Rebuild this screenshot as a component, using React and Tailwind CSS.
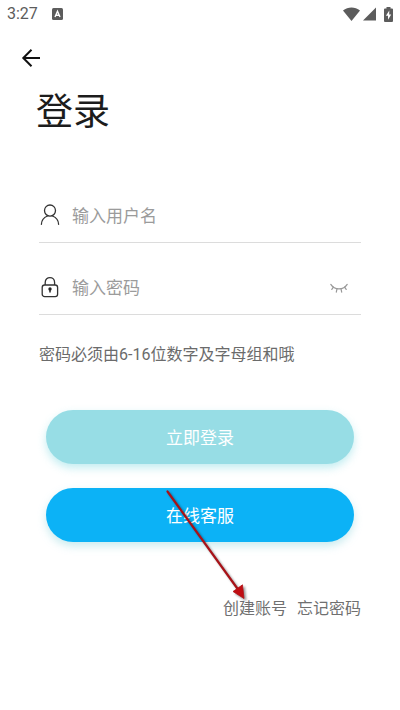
import React from "react";

function StatusBar() {
  return (
    <div className="flex h-7 items-center justify-between px-[7px] text-[#5c5c5c]">
      <div className="flex items-center gap-[14px]">
        <span className="text-base leading-7">3:27</span>
        <svg width="11" height="12" viewBox="0 0 11 12" aria-hidden="true">
          <rect width="11" height="12" rx="1.5" fill="#5c5c5c" />
          <path d="M3 9 L5.5 3.2 L8 9 M4 7.2 H7" fill="none" stroke="#fff" strokeWidth="1.4" />
        </svg>
      </div>
      <div className="flex items-center">
        <svg width="17" height="14" viewBox="0 0 17 14" aria-hidden="true">
          <path d="M8.5 14 L0 3.5 C5 -0.6 12 -0.6 17 3.5 Z" fill="#5c5c5c" />
        </svg>
        <svg className="ml-[3px]" width="13" height="14" viewBox="0 0 13 14" aria-hidden="true">
          <path d="M13 0.5 V13.5 H0 Z" fill="#5c5c5c" />
        </svg>
        <svg className="ml-2" width="9" height="15" viewBox="0 0 9 15" aria-hidden="true">
          <path d="M2.5 0 H6.5 V1.5 H8 Q9 1.5 9 2.5 V14 Q9 15 8 15 H1 Q0 15 0 14 V2.5 Q0 1.5 1 1.5 H2.5 Z" fill="#5c5c5c" />
          <path d="M5.3 3.5 L1.9 8.8 H4 V12.8 L7.2 7.4 H5.2 Z" fill="#fff" />
        </svg>
      </div>
    </div>
  );
}

function UserIcon() {
  return (
    <svg width="22" height="22" viewBox="0 0 22 22" fill="none" stroke="#333" strokeWidth="1.3" strokeLinecap="round" aria-hidden="true">
      <ellipse cx="11" cy="6.6" rx="5.5" ry="5.6" />
      <path d="M2.4 20.3 C2.6 16 4.8 13.4 8.4 12 M13.6 12 C17.2 13.4 19.4 16 19.6 20.3" />
    </svg>
  );
}

function LockIcon() {
  return (
    <svg width="22" height="22" viewBox="0 0 22 22" fill="none" stroke="#333" strokeWidth="1.3" aria-hidden="true">
      <rect x="3.2" y="9" width="15.4" height="11.6" rx="2.4" />
      <path d="M6.2 9 V6.5 C6.2 0 15.6 0 15.6 6.5 V9" />
      <circle cx="11" cy="13" r="1.7" fill="#222" stroke="none" />
      <path d="M11 13.5 V16.6" stroke="#222" strokeWidth="1.5" />
    </svg>
  );
}

function ClosedEyeIcon() {
  return (
    <svg width="18" height="10" viewBox="0 0 18 10" fill="none" stroke="#999" strokeWidth="1.2" strokeLinecap="round" aria-hidden="true">
      <path d="M0.8 1.4 C4.5 7.4 13.5 7.4 17.2 1.4" />
      <path d="M3.4 4.2 L1.8 6.4 M7 5.8 L6.3 9.2 M11 5.8 L11.7 9.2 M14.6 4.2 L16.2 6.4" />
    </svg>
  );
}

function Field({ id, label, type, icon, children }) {
  return (
    <div className="flex h-[72px] items-end border-b border-[#dcdcdc]">
      <div className="flex h-[55px] w-full items-center">
        <label htmlFor={id} aria-label={label} className="shrink-0">
          {icon}
        </label>
        <input
          id={id}
          type={type}
          placeholder={label}
          className="ml-[11px] min-w-0 flex-1 bg-transparent pt-[2px] text-[17px] leading-6 text-[#222] outline-none placeholder:text-[#9b9b9b]"
        />
        {children}
      </div>
    </div>
  );
}

function PointerArrow() {
  return (
    <svg
      className="pointer-events-none absolute left-[120px] top-[2px] overflow-visible drop-shadow-[2px_2px_1px_rgba(0,0,0,0.4)]"
      width="79"
      height="109"
      viewBox="0 0 79 109"
      aria-hidden="true"
    >
      <path d="M1.5 1.5 L71 98" stroke="#a81218" strokeWidth="2.2" strokeLinecap="round" />
      <path d="M78 108.5 L67 101.5 L76.5 94.8 Z" fill="#c00d12" stroke="#b01015" strokeWidth="0.8" />
    </svg>
  );
}

export default function App() {
  return (
    <div className="min-h-screen bg-white font-[Roboto,'Noto_Sans_CJK_SC',sans-serif]">
      <StatusBar />
      <header className="flex h-[60px] items-center px-5">
        <button type="button" aria-label="返回" className="block">
          <svg width="22" height="22" viewBox="0 0 22 22" fill="none" stroke="#111" strokeWidth="2" aria-hidden="true">
            <path d="M20 11 H4 M11.5 2.8 L3.3 11 L11.5 19.2" />
          </svg>
        </button>
      </header>
      <main className="px-[39px]">
        <h1 className="-ml-[3px] pt-[3px] text-[37px] leading-[44px] text-[#1c1c1c]">登录</h1>
        <form className="mt-9" onSubmit={(event) => event.preventDefault()}>
          <Field id="username" label="输入用户名" type="text" icon={<UserIcon />} />
          <Field id="password" label="输入密码" type="password" icon={<LockIcon />}>
            <button type="button" aria-label="显示密码" className="mr-[13px] pt-[3px]">
              <ClosedEyeIcon />
            </button>
          </Field>
          <p className="mt-7 whitespace-nowrap text-base leading-6 text-[#6b6b6b]">密码必须由6-16位数字及字母组和哦</p>
          <div className="mt-[43px] flex flex-col gap-6 px-[7px]">
            <button type="submit" className="h-[54px] rounded-full bg-[#97dde5] pt-1 text-[17px] text-white shadow-[0_4px_8px_rgba(120,215,225,0.45)]">
              立即登录
            </button>
            <div className="relative flex">
              <button type="button" className="h-[54px] flex-1 rounded-full bg-[#0cb2f6] pt-1 text-[17px] text-white shadow-[0_4px_8px_rgba(120,205,215,0.4)]">
                在线客服
              </button>
              <PointerArrow />
            </div>
          </div>
        </form>
        <nav className="mt-[55px] flex justify-end gap-[10px] whitespace-nowrap text-base leading-6 text-[#707070]">
          <a href="#register">创建账号</a>
          <a href="#forgot">忘记密码</a>
        </nav>
      </main>
    </div>
  );
}
